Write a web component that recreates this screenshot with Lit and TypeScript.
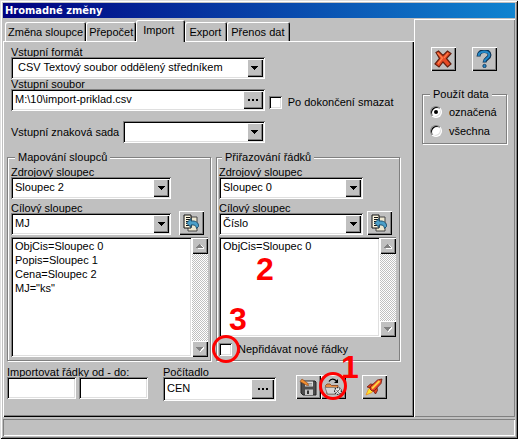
import { LitElement, html, css, svg } from "lit";
import { customElement, property } from "lit/decorators.js";

const base = css`
  *, *::before, *::after { box-sizing: border-box; }
  :host {
    --face: #c0c0c0;
    --dark: #808080;
    --light: #dfdfdf;
    --sunken: inset 1px 1px #808080, inset -1px -1px #fff, inset 2px 2px #000, inset -2px -2px #dfdfdf;
    --raised: inset 1px 1px #fff, inset -1px -1px #000, inset -2px -2px #808080;
    font: 11px/14px "Liberation Sans", Arial, sans-serif;
    color: #000;
  }
  button, input, select, textarea { font: inherit; color: inherit; margin: 0; border: 0; border-radius: 0; outline: 0; min-width: 0; }
`;

const icons = {
  close: svg`
    <path d="M2 2.5 4.500 1 9 5.500 13.500 1 17 3.500 12.500 8.500 17 14 13.500 17 9 12 5 17 1 14 5.500 8.500Z" fill="#e84a24" stroke="#64200f" stroke-width="1.200"/>
    <path d="M3.500 3 8.500 8 4 13.500M14 3 10 8" fill="none" stroke="#ff8450" stroke-width="1.200"/>`,
  help: svg`
    <path d="M3.500 6.500C3.500 -.5 14.500 -.5 14.500 5 14.500 8.500 9.500 8.500 9.500 12.500" fill="none" stroke="#0c2f50" stroke-width="4"/>
    <path d="M3.500 5.800C4 .3 14.300 .3 14.300 5 14.300 8.300 9.500 8.500 9.500 11.800" fill="none" stroke="#2488c8" stroke-width="2.200"/>
    <circle cx="9.500" cy="16" r="1.700" fill="#2488c8" stroke="#0c2f50" stroke-width=".8"/>`,
  assign: svg`
    <path d="M9 3H15V17H6V13H9Z" fill="#eee8d0" stroke="#444" stroke-width="1"/>
    <path d="M2 1H9V14H2Z" fill="#fff8e0" stroke="#111"/>
    <path d="M4 3.500H8M4 5.500H8M4 7.500H8M4 9.500H8M4 11.500H8" stroke="#111"/>
    <path d="M2.500 2V14" stroke="#777" stroke-dasharray="1 1"/>
    <path d="M4.500 9 9 4.500V7C13.500 6.500 17 8.500 16.500 12.500L14.500 14.500C14.500 11.500 12 10.500 9 11V13.500Z" fill="#4b9fc8" stroke="#174868" stroke-width=".9"/>`,
  save: svg`
    <path d="M3 3H16L17 4V17H4L2 15V4Z" fill="#4c4c4c" stroke="#222"/>
    <path d="M6 3.500H14V8.500H6Z" fill="#d8d8d8"/>
    <path d="M7 5.500H13M7 7H13" stroke="#888" stroke-width=".8"/>
    <path d="M6 11.500H14V17H6Z" fill="#c8c8c8"/>
    <path d="M8 12.500H10V16H8Z" fill="#333"/>
    <path d="M1 3.500 3 1 9 5.500 9.500 7.500 7 7Z" fill="#f09030" stroke="#8a3c10" stroke-width=".6"/>`,
  load: svg`
    <path d="M1.500 7.500 3 6H6L7.500 7.500H14V13L11 16H3Z" fill="#e89048" stroke="#843c14" stroke-width=".8"/>
    <path d="M1 9.500H11L15 11V16H3.500Z" fill="#d5d5d5" stroke="#777" stroke-width=".8"/>
    <path d="M5 3.500C7 .5 10 .5 12.500 3" fill="none" stroke="#000" stroke-width="1.300"/>
    <path d="M14 1V5H10Z"/>
    <circle cx="14" cy="13" r="3.400" fill="#e8e8e8" stroke="#222" stroke-width="1.200" stroke-dasharray="1.400 1"/>
    <path d="M12 15 16 11M12.500 12 15 15" stroke="#555" stroke-width=".8"/>`,
  rocket: svg`
    <path d="M1 17 3.500 11 5.500 10 8 12.500 7 14.500Z" fill="#ffe528" stroke="#f08c20" stroke-width=".8"/>
    <path d="M2 9 5.500 6 9 6.500 6 10ZM10.500 16 12.500 12.500 12 9.500 8 12.500Z" fill="#e04020" stroke="#70180c" stroke-width=".8"/>
    <path d="M17 1 12.500 2 5.500 8.500 5 11 7 13 9.500 12.500 16 5.500Z" fill="#e84828" stroke="#70180c" stroke-width=".8"/>
    <path d="M14.500 3 7 10.500" stroke="#ffd440" stroke-width="2"/>`,
};

@customElement("icon-button")
class IconButton extends LitElement {
  @property() icon: keyof typeof icons = "close";
  @property() label = "";

  static styles = [base, css`
    :host { display: block; flex: none; }
    button { display: grid; place-items: center; width: 25px; height: 24px; padding: 0 1px 1px 0; background: var(--face); box-shadow: var(--raised); }
    svg { display: block; width: 18px; height: 18px; }
  `];

  render() {
    return html`<button type="button" aria-label=${this.label}>
      <svg viewBox="0 0 18 18" aria-hidden="true">${icons[this.icon]}</svg>
    </button>`;
  }
}

@customElement("drop-field")
class DropField extends LitElement {
  @property() label = "";
  @property() value = "";
  @property({ type: Boolean, reflect: true }) beside = false;
  @property({ type: Boolean, reflect: true }) indent = false;

  static styles = [base, css`
    :host { display: block; min-width: 0; }
    :host([beside]) { display: flex; align-items: center; gap: 4px; }
    label { display: block; line-height: 10px; white-space: nowrap; }
    .box { position: relative; flex: 1; height: 22px; background: #fff; box-shadow: var(--sunken); }
    select { appearance: none; display: block; width: 100%; height: 22px; padding: 0 20px 2px 4px; background: none; }
    :host([indent]) select { padding-left: 7px; }
    .arrow { position: absolute; top: 2px; right: 2px; width: 16px; height: 18px; display: grid; place-items: center; background: var(--face); box-shadow: var(--raised); pointer-events: none; }
    .arrow svg { width: 7px; height: 4px; }
  `];

  render() {
    return html`
      <label for="s">${this.label}</label>
      <div class="box">
        <select id="s"><option>${this.value}</option></select>
        <span class="arrow"><svg viewBox="0 0 7 4" shape-rendering="crispEdges"><path d="M0 0H7L3.500 4Z" /></svg></span>
      </div>`;
  }
}

@customElement("text-field")
class TextField extends LitElement {
  @property() label = "";
  @property() value = "";
  @property({ type: Boolean, reflect: true }) tall = false;

  static styles = [base, css`
    :host { display: block; min-width: 0; }
    label { display: block; line-height: 10px; white-space: nowrap; }
    .box { display: flex; height: 22px; padding: 2px; background: #fff; box-shadow: var(--sunken); }
    :host([tall]) .box { height: 24px; }
    input { flex: 1; width: 0; padding: 0 2px 2px; background: none; }
    button { display: flex; align-items: center; justify-content: center; gap: 2px; width: 20px; padding: 0; background: var(--face); box-shadow: var(--raised); }
    :host([tall]) button { width: 23px; }
    i { width: 2px; height: 2px; background: #000; }
  `];

  render() {
    return html`
      <label for="t">${this.label}</label>
      <div class="box">
        <input id="t" type="text" .value=${this.value} />
        <button type="button" aria-label="${this.label} …"><i></i><i></i><i></i></button>
      </div>`;
  }
}

@customElement("list-box")
class ListBox extends LitElement {
  @property() label = "";
  @property() value = "";

  static styles = [base, css`
    :host { display: flex; flex: 1; min-height: 60px; }
    textarea { flex: 1; width: 0; height: auto; resize: none; overflow: hidden; padding: 2px 4px; background: #fff; white-space: pre; box-shadow: var(--sunken); }
    .bar { display: flex; flex-direction: column; justify-content: space-between; width: 16px; border-top: 1px solid var(--dark);
      background: repeating-conic-gradient(#fff 0 25%, #c0c0c0 0 50%) 0 0 / 2px 2px; }
    button { display: grid; place-items: center; width: 16px; height: 16px; padding: 0; background: var(--face); box-shadow: var(--raised); }
    svg { width: 8px; height: 5px; }
  `];

  render() {
    return html`
      <textarea aria-label=${this.label} .value=${this.value}></textarea>
      <div class="bar">
        <button type="button" disabled aria-label="▲"><svg viewBox="0 0 8 5" shape-rendering="crispEdges"><path d="M1 5H8V4L5 1Z" fill="#fff" /><path d="M0 4H7L3.500 0Z" fill="#808080" /></svg></button>
        <button type="button" disabled aria-label="▼"><svg viewBox="0 0 8 5" shape-rendering="crispEdges"><path d="M7 0H8V1L4 5Z" fill="#fff" /><path d="M0 0H7L3.500 4Z" fill="#808080" /></svg></button>
      </div>`;
  }
}

@customElement("app-root")
class AppRoot extends LitElement {
  static styles = [base, css`
    :host { display: block; }
    .window { display: flex; flex-direction: column; min-height: 100vh; padding: 3px; overflow: hidden; background: var(--face);
      box-shadow: inset 1px 1px #dfdfdf, inset -1px -1px #000, inset 2px 2px #fff, inset -2px -2px #808080; }
    h1 { margin: 0; padding-left: 2px; font: bold 11px/15px "DejaVu Sans Condensed", "DejaVu Sans", sans-serif; color: #fff; background: linear-gradient(90deg, #000080, #1084d0); }
    .body { display: flex; flex: 1; }
    .main { display: flex; flex: 1; flex-direction: column; min-width: 0; }

    .tabs { display: flex; align-items: flex-end; height: 23px; padding-left: 2px; }
    .tab { height: 19px; padding: 0 3px; line-height: 18px; white-space: nowrap; background: var(--face); border-radius: 2px 2px 0 0; box-shadow: inset 1px 1px #fff, inset -1px 0 #000, inset -2px 0 #808080; }
    .tab.active { position: relative; z-index: 1; height: 22px; margin-bottom: -1px; padding: 0 11px 2px 7px; }
    .active ~ .tab { padding: 0 6px 0 4px; }

    .panel { display: flex; flex: 1; flex-direction: column; padding: 6px 14px 16px 4px;
      box-shadow: inset 1px 1px #fff, inset -1px -1px #000, inset -2px -2px #808080; }
    .source { display: flex; gap: 4px; padding-left: 4px; }
    .fields { flex: 253; min-width: 0; }
    .charset { margin-top: 10px; }
    .after { flex: 131; padding-top: 48px; }
    .check { display: flex; align-items: center; gap: 6px; white-space: nowrap; }
    input[type="checkbox"] { appearance: none; flex: none; width: 13px; height: 13px; background: #fff; box-shadow: var(--sunken); }

    .groups { display: grid; flex: 1; grid-template-columns: 204fr 184fr; gap: 5px; padding-top: 7px; }
    fieldset { display: flex; flex-direction: column; min-width: 0; margin: 0; padding: 3px 2px 3px 3px; border: 1px solid var(--dark); box-shadow: 1px 1px #fff, inset 1px 1px #fff; }
    legend { margin-left: 4px; padding: 0 3px; background: var(--face); }
    fieldset.narrow { padding: 3px 3px 3px 2px; }
    .narrow legend { margin-left: 3px; }
    .pick { display: flex; align-items: flex-end; gap: 8px; padding: 4px 4px 2px 0; }
    .pick drop-field, .first drop-field { flex: 1; }
    .first { display: flex; padding-right: 37px; }
    .narrow .pick { gap: 4px; }
    .narrow .first { padding-right: 33px; }
    .area { position: relative; display: flex; flex: 1; }
    .new-rows { position: relative; padding: 5px 0 1px; }

    .footer { display: flex; align-items: flex-start; padding-top: 6px; }
    .range { flex: 141; min-width: 0; }
    .range label { display: block; line-height: 10px; white-space: nowrap; }
    .pair { display: flex; gap: 3px; }
    .pair input { flex: 1; width: 0; height: 22px; padding: 0 4px; background: #fff; box-shadow: var(--sunken); }
    .counter { flex: 113; margin: 0 20px 0 15px; }
    .tools { display: flex; padding: 8px 13px 0 0; }
    .spot { position: relative; }
    .launch { margin-left: 16px; }

    .side { width: 101px; margin-top: 1px; padding: 28px 8px 0 8px; box-shadow: inset 1px 1px #fff, inset -1px -1px #808080; }
    .actions { display: flex; gap: 16px; padding-left: 9px; }
    .side fieldset { margin-top: 16px; padding: 4px 6px 5px 7px; gap: 5px; }
    .side legend { margin-left: 0; }
    .radio { display: flex; align-items: center; gap: 7px; white-space: nowrap; }
    input[type="radio"] { appearance: none; display: grid; place-items: center; flex: none; width: 12px; height: 12px; border-radius: 50%; background: #fff; border: 1px solid; border-color: #808080 #fff #fff #808080; box-shadow: inset 1px 1px #000, inset -1px -1px #dfdfdf; }
    input[type="radio"]:checked::before { content: ""; width: 4px; height: 4px; border-radius: 50%; background: #000; }

    .status { height: 17px; margin-top: 2px; box-shadow: inset 1px 1px #808080, inset -1px -1px #fff; }

    .mark { position: absolute; z-index: 2; font-weight: bold; font-size: 32px; line-height: 32px; color: #f00; pointer-events: none; }
    .ring { position: absolute; z-index: 2; width: 28px; height: 28px; border: 3px solid #f00; border-radius: 50%; pointer-events: none; }
    .two { top: 16px; left: 37px; }
    .three { top: -34px; left: 10px; }
    .one { top: -24px; left: 20px; }
    .ring-check { top: -2px; left: -7px; }
    .ring-load { top: -3px; left: -2px; }
  `];

  render() {
    return html`
      <div class="window">
        <h1>Hromadné změny</h1>
        <div class="body">
          <div class="main">
            <div class="tabs" role="tablist">
              ${["Změna sloupce", "Přepočet", "Import", "Export", "Přenos dat"].map(
                (t) => html`<button type="button" role="tab" aria-selected=${t === "Import"} class="tab ${t === "Import" ? "active" : ""}">${t}</button>`
              )}
            </div>
            <div class="panel">
              <div class="source">
                <div class="fields">
                  <drop-field indent label="Vstupní formát" value="CSV Textový soubor oddělený středníkem"></drop-field>
                  <text-field label="Vstupní soubor" value="M:\\10\\import-priklad.csv"></text-field>
                  <drop-field class="charset" beside label="Vstupní znaková sada"></drop-field>
                </div>
                <div class="after">
                  <label class="check"><input type="checkbox" />Po dokončení smazat</label>
                </div>
              </div>
              <div class="groups">
                <fieldset>
                  <legend>Mapování sloupců</legend>
                  <div class="first"><drop-field label="Zdrojový sloupec" value="Sloupec 2"></drop-field></div>
                  <div class="pick">
                    <drop-field label="Cílový sloupec" value="MJ"></drop-field>
                    <icon-button icon="assign" label="Přiřadit"></icon-button>
                  </div>
                  <div class="area">
                    <list-box label="Mapování sloupců" value=${'ObjCis=Sloupec 0\nPopis=Sloupec 1\nCena=Sloupec 2\nMJ="ks"'}></list-box>
                  </div>
                </fieldset>
                <fieldset class="narrow">
                  <legend>Přiřazování řádků</legend>
                  <div class="first"><drop-field label="Zdrojový sloupec" value="Sloupec 0"></drop-field></div>
                  <div class="pick">
                    <drop-field label="Cílový sloupec" value="Číslo"></drop-field>
                    <icon-button icon="assign" label="Přiřadit"></icon-button>
                  </div>
                  <div class="area">
                    <list-box label="Přiřazování řádků" value="ObjCis=Sloupec 0"></list-box>
                    <span class="mark two">2</span>
                  </div>
                  <div class="new-rows">
                    <label class="check"><input type="checkbox" />Nepřidávat nové řádky</label>
                    <span class="ring ring-check"></span>
                    <span class="mark three">3</span>
                  </div>
                </fieldset>
              </div>
              <div class="footer">
                <div class="range">
                  <label for="from">Importovat řádky od - do:</label>
                  <div class="pair">
                    <input id="from" type="text" />
                    <input type="text" aria-label="do" />
                  </div>
                </div>
                <text-field class="counter" tall label="Počítadlo" value="CEN"></text-field>
                <div class="tools">
                  <icon-button icon="save" label="Uložit"></icon-button>
                  <div class="spot">
                    <icon-button icon="load" label="Otevřít"></icon-button>
                    <span class="ring ring-load"></span>
                    <span class="mark one">1</span>
                  </div>
                  <icon-button class="launch" icon="rocket" label="Spustit"></icon-button>
                </div>
              </div>
            </div>
          </div>
          <div class="side">
            <div class="actions">
              <icon-button icon="close" label="Zavřít"></icon-button>
              <icon-button icon="help" label="Nápověda"></icon-button>
            </div>
            <fieldset>
              <legend>Použít data</legend>
              <label class="radio"><input type="radio" name="use" checked />označená</label>
              <label class="radio"><input type="radio" name="use" />všechna</label>
            </fieldset>
          </div>
        </div>
        <div class="status"></div>
      </div>`;
  }
}
